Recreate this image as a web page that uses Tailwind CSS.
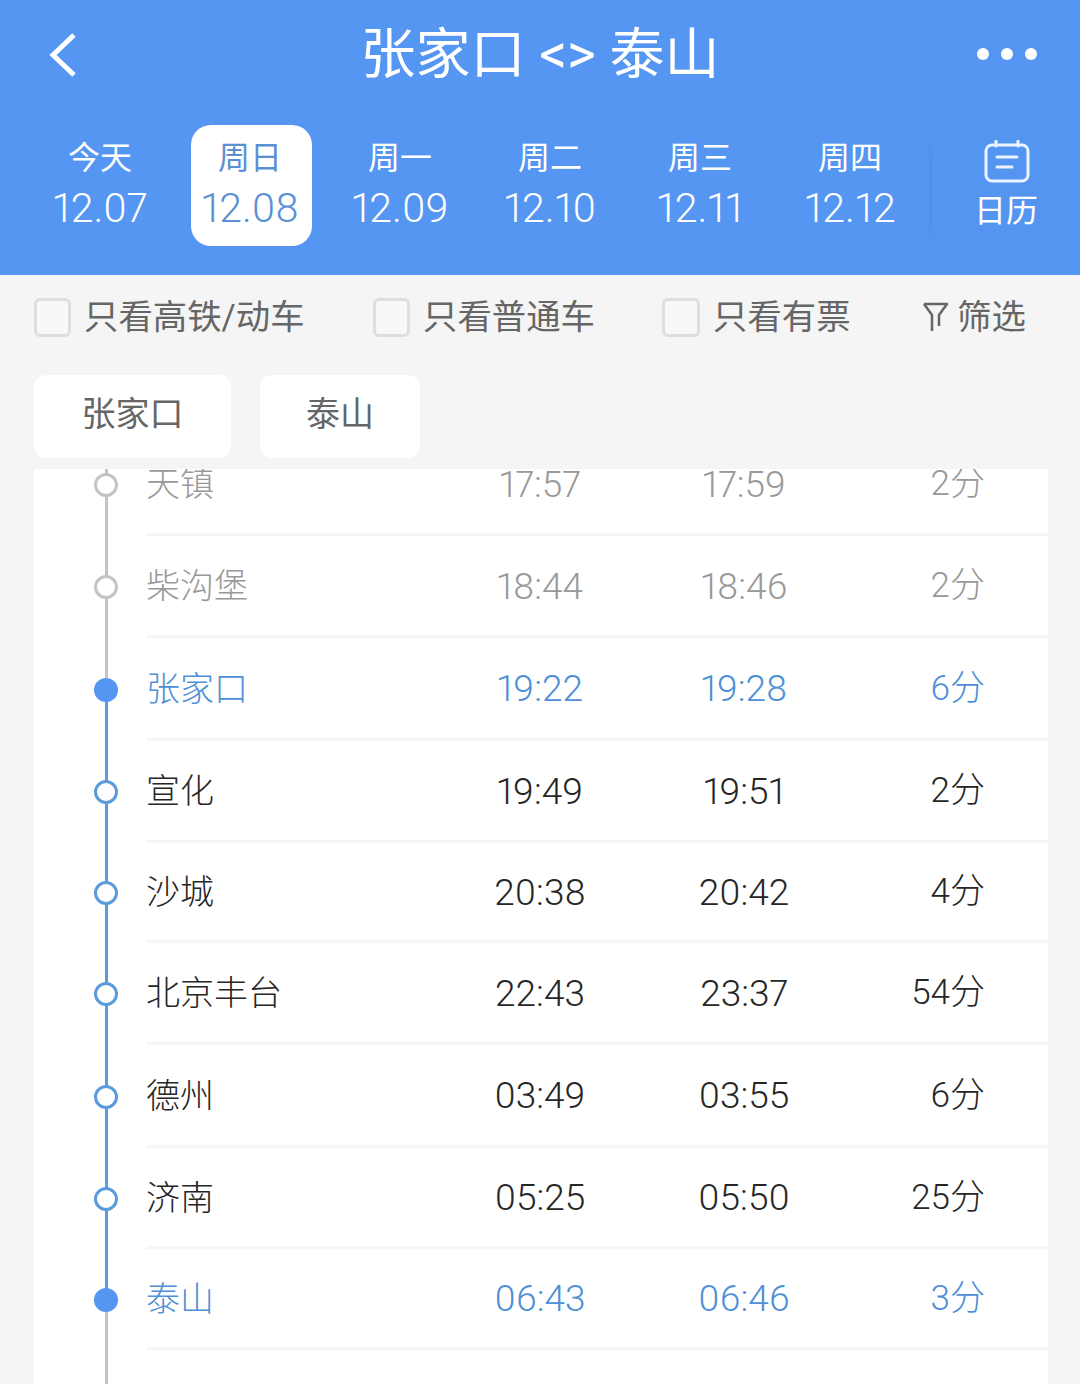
<!DOCTYPE html>
<html lang="zh-CN">
  <head>
    <meta charset="UTF-8" />
    <meta name="viewport" content="width=device-width, initial-scale=1" />
    <title>张家口 - 泰山</title>
    <script src="https://cdn.jsdelivr.net/npm/@tailwindcss/browser@4"></script>
  </head>
  <body class="bg-[#f5f5f5] h-[1384px] overflow-hidden proportional-nums font-['Roboto','Noto_Sans_CJK_SC',sans-serif]">
    <header class="bg-[#5596f2] h-[275px] text-white flex flex-col">
      <div class="h-[125px] flex items-start justify-between">
        <div class="w-[120px] pl-[46px] pt-[32px]">
          <svg width="36" height="46" viewBox="0 0 36 46" fill="none" stroke="white" stroke-width="5">
            <path d="M28 3 L7 23 L28 43" />
          </svg>
        </div>
        <h1 class="text-[55px] leading-[60px] mt-[24px] font-normal whitespace-pre">张家口 &lt;&gt; 泰山</h1>
        <div class="w-[120px] flex justify-end gap-[12px] pr-[43px] pt-[48px]">
          <span class="w-[12px] h-[12px] rounded-full bg-white"></span>
          <span class="w-[12px] h-[12px] rounded-full bg-white"></span>
          <span class="w-[12px] h-[12px] rounded-full bg-white"></span>
        </div>
      </div>
      <div class="flex pl-[25px]">
        <div class="w-[150px] h-[121px] flex flex-col items-center pt-[14px]">
          <span class="text-[32px] leading-[38px]">今天</span>
          <span class="text-[41px] leading-[48px] mt-[7px] font-light">12.07</span>
        </div>
        <div class="w-[150px] h-[121px] flex justify-end pr-[13px]">
          <div class="w-[121px] h-[121px] bg-white rounded-[20px] flex flex-col items-center pt-[14px] pr-[3px] text-[#5b8fd3]">
            <span class="text-[32px] leading-[38px]">周日</span>
            <span class="text-[41px] leading-[48px] mt-[7px] font-light">12.08</span>
          </div>
        </div>
        <div class="w-[150px] h-[121px] flex flex-col items-center pt-[14px]">
          <span class="text-[32px] leading-[38px]">周一</span>
          <span class="text-[41px] leading-[48px] mt-[7px] font-light">12.09</span>
        </div>
        <div class="w-[150px] h-[121px] flex flex-col items-center pt-[14px]">
          <span class="text-[32px] leading-[38px]">周二</span>
          <span class="text-[41px] leading-[48px] mt-[7px] font-light">12.10</span>
        </div>
        <div class="w-[150px] h-[121px] flex flex-col items-center pt-[14px]">
          <span class="text-[32px] leading-[38px]">周三</span>
          <span class="text-[41px] leading-[48px] mt-[7px] font-light">12.11</span>
        </div>
        <div class="w-[150px] h-[121px] flex flex-col items-center pt-[14px]">
          <span class="text-[32px] leading-[38px]">周四</span>
          <span class="text-[41px] leading-[48px] mt-[7px] font-light">12.12</span>
        </div>
        <div class="ml-[7px] w-[148px] h-[100px] mt-[15px] flex flex-col items-center bg-[#5395f1] shadow-[-6px_0_8px_-5px_#5089e0]">
          <svg width="48" height="44" viewBox="0 0 48 44" fill="none" stroke="#eaf3ff" stroke-width="3" stroke-linecap="round" class="ml-[2px]">
            <rect x="3" y="5" width="42" height="36" rx="6" />
            <path d="M13 1 V6 M35 1 V6 M14 17 H34 M14 27 H29" />
          </svg>
          <span class="text-[32px] leading-[40px] mt-[7px]">日历</span>
        </div>
      </div>
    </header>

    <div class="flex items-center h-[84px] pl-[34px] text-[34.4px] text-[#666]">
      <span class="w-[37px] h-[39px] rounded-[6px] border-[3px] border-[#dedede] bg-[#f8f8f8]"></span>
      <span class="ml-[13px] w-[289px] pt-[1px]">只看高铁/动车</span>
      <span class="w-[37px] h-[39px] rounded-[6px] border-[3px] border-[#dedede] bg-[#f8f8f8]"></span>
      <span class="ml-[13px] w-[239px] pt-[1px]">只看普通车</span>
      <span class="w-[38px] h-[39px] rounded-[6px] border-[3px] border-[#dedede] bg-[#f8f8f8]"></span>
      <span class="ml-[13px] w-[211px] pt-[1px]">只看有票</span>
      <svg width="27" height="32" viewBox="0 0 27 32" fill="none" stroke="#666" stroke-width="2.5" stroke-linejoin="round" class="-ml-[2px]">
        <path d="M2 3 H25 L17 14 V25 M2 3 L10 14 V30" />
      </svg>
      <span class="ml-[8px] pt-[1px]">筛选</span>
    </div>

    <div class="flex gap-[29px] pl-[34px] pt-[16px] text-[34px] text-[#666]">
      <div class="w-[197px] h-[83px] pb-[4px] bg-white rounded-[12px] flex items-center justify-center">张家口</div>
      <div class="w-[160px] h-[83px] pb-[4px] bg-white rounded-[12px] flex items-center justify-center">泰山</div>
    </div>

    <div class="mt-[11px] ml-[34px] w-[1014px] h-[915px] bg-white overflow-hidden">
      <div id="rows" class="-mt-[35px]"></div>
    </div>

    <script>
      // stop list for the train: name, arrive, depart, wait, state, line above, row height
      const stops = [
        ["天镇", "17:57", "17:59", "2分", "past", "past", "h-[102px]"],
        ["柴沟堡", "18:44", "18:46", "2分", "past", "past", "h-[102px]"],
        ["张家口", "19:22", "19:28", "6分", "stop", "past", "h-[103px]"],
        ["宣化", "19:49", "19:51", "2分", "mid", "on", "h-[102px]"],
        ["沙城", "20:38", "20:42", "4分", "mid", "on", "h-[100px]"],
        ["北京丰台", "22:43", "23:37", "54分", "mid", "on", "h-[102px]"],
        ["德州", "03:49", "03:55", "6分", "mid", "on", "h-[103px]"],
        ["济南", "05:25", "05:50", "25分", "mid", "on", "h-[101px]"],
        ["泰山", "06:43", "06:46", "3分", "stop", "on", "h-[101px]"],
        ["", "", "", "", "past", "past", "h-[102px]"],
      ];

      const textColor = { past: "text-[#999]", stop: "text-[#4f8fd6]", mid: "text-[#262626]" };
      const dot = {
        past: "bg-white border-[3px] border-[#c4c4c4]",
        stop: "bg-[#5596f2]",
        mid: "bg-white border-[3px] border-[#5b9bdc]",
      };
      const lineAbove = { past: "bg-[#c4c4c4]", on: "bg-[#5b9bdc]" };
      const lineBelow = { past: "bg-[#c4c4c4]", mid: "bg-[#5b9bdc]", stop: "bg-[#5b9bdc]" };

      document.getElementById("rows").innerHTML = stops
        .map((s, i) => {
          const below = i === 8 ? "bg-[#c4c4c4]" : lineBelow[s[4]];
          return `
        <div class="relative ${s[6]} pl-[112px] ${textColor[s[4]]}">
          <span class="absolute left-[71px] top-0 w-[2.5px] h-1/2 ${lineAbove[s[5]]}"></span>
          <span class="absolute left-[71px] top-1/2 w-[2.5px] h-1/2 ${below}"></span>
          <span class="absolute left-[60px] top-1/2 -mt-[12px] w-[24px] h-[24px] rounded-full ${dot[s[4]]}"></span>
          <div class="h-full flex items-center pt-[2px] border-b-[3px] border-[#f6f6f6] text-[34px] font-light">
            <span class="w-[292px]">${s[0]}</span>
            <span class="w-[204px] text-center text-[37px]">${s[1]}</span>
            <span class="w-[204px] text-center text-[37px]">${s[2]}</span>
            <span class="w-[139px] text-right text-[35px]">${s[3]}</span>
          </div>
        </div>`;
        })
        .join("");
    </script>
  </body>
</html>
